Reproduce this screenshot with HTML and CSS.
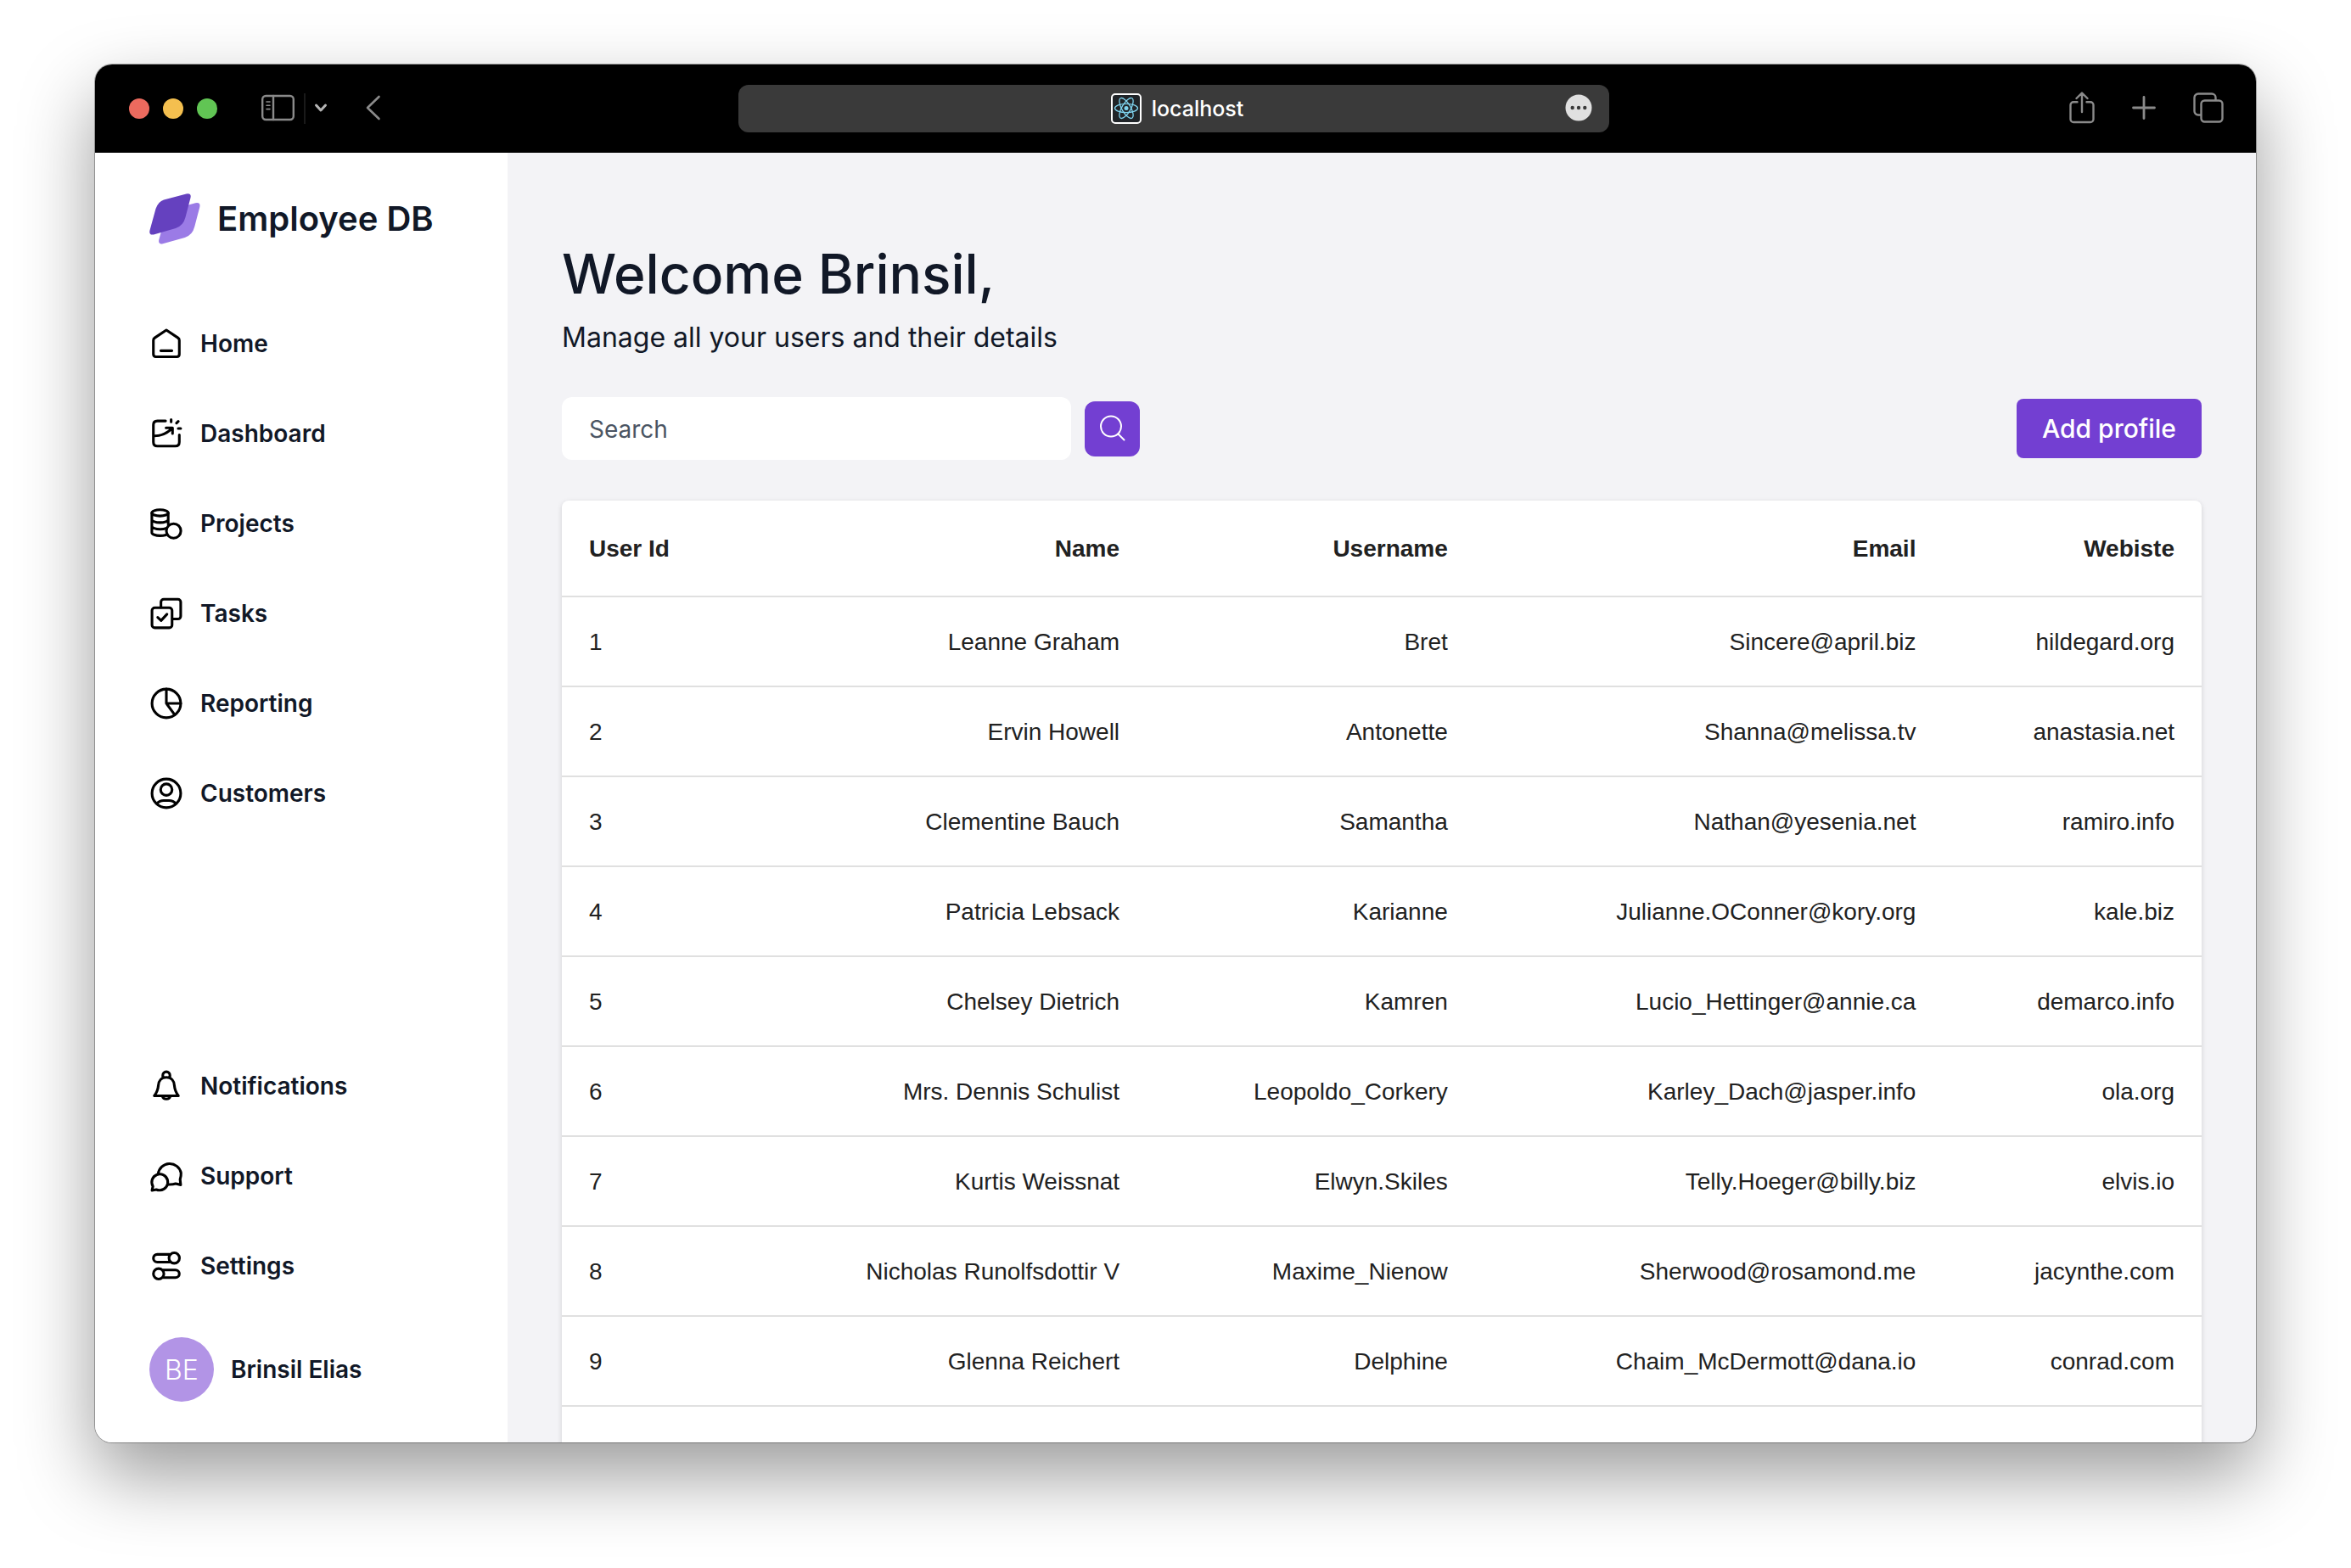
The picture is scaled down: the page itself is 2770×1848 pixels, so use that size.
FILE: index.html
```html
<!DOCTYPE html>
<html lang="en">
<head>
<meta charset="utf-8">
<meta name="viewport" content="width=device-width, initial-scale=1">
<title>Employee DB</title>
<link rel="stylesheet" href="styles.css">
</head>
<body>
<div class="window">
  <header class="titlebar">
    <div class="titlebar-left">
      <div class="lights">
        <button class="light light-close" aria-label="Close"></button>
        <button class="light light-minimise" aria-label="Minimise"></button>
        <button class="light light-zoom" aria-label="Zoom"></button>
      </div>
      <div class="side-controls">
        <button class="bar-button" aria-label="Toggle sidebar">
          <svg width="40" height="32" viewBox="0 0 40 32" fill="none" stroke="#8a8a8a" stroke-width="2.4" stroke-linecap="round"><rect x="1.2" y="2" width="36.6" height="28" rx="4"/><path d="M14 2v28"/><path d="M6 9h4M6 13.300h4M6 17.600h4" stroke-width="1.600"/></svg>
        </button>
        <span class="bar-divider"></span>
        <button class="bar-button" aria-label="Tab groups">
          <svg width="16" height="12" viewBox="0 0 16 12" fill="none" stroke="#b4b4b4" stroke-width="3" stroke-linecap="round" stroke-linejoin="round"><path d="M2.500 3l5.500 6 5.500-6"/></svg>
        </button>
      </div>
      <button class="bar-button" aria-label="Back">
        <svg width="20" height="30" viewBox="0 0 20 30" fill="none" stroke="#8a8a8a" stroke-width="2.600" stroke-linecap="round" stroke-linejoin="round"><path d="M16.500 2L3 15l13.500 13"/></svg>
      </button>
    </div>
    <div class="address">
      <span class="address-site">
        <svg width="36" height="36" viewBox="0 0 36 36"><rect x="1" y="1" width="34" height="34" rx="4" fill="#202428" stroke="#fff" stroke-width="2"/><g fill="none" stroke="#7fd3ee" stroke-width="1.300"><ellipse cx="18" cy="17.500" rx="13.500" ry="5.200"/><ellipse cx="18" cy="17.500" rx="13.500" ry="5.200" transform="rotate(60 18 17.500)"/><ellipse cx="18" cy="17.500" rx="13.500" ry="5.200" transform="rotate(120 18 17.500)"/></g><circle cx="18" cy="17.500" r="2.500" fill="#7fd3ee"/></svg>
        <span>localhost</span>
      </span>
      <button class="bar-button" aria-label="Page settings">
        <svg width="32" height="32" viewBox="0 0 32 32"><circle cx="16" cy="16" r="15.500" fill="#e0e0e0"/><g fill="#3a3a3a"><circle cx="8.700" cy="16" r="2.200"/><circle cx="16" cy="16" r="2.200"/><circle cx="23.300" cy="16" r="2.200"/></g></svg>
      </button>
    </div>
    <div class="titlebar-right">
      <button class="bar-button" aria-label="Share">
        <svg width="30" height="38" viewBox="0 0 30 38" fill="none" stroke="#8a8a8a" stroke-width="2.400" stroke-linecap="round" stroke-linejoin="round"><path d="M9.500 12.200H5a3.500 3.500 0 0 0-3.500 3.500V32.500A3.500 3.500 0 0 0 5 36h20a3.500 3.500 0 0 0 3.500-3.500V15.700A3.500 3.500 0 0 0 25 12.200h-4.500M15 24V2M8.500 8L15 1.500 21.500 8"/></svg>
      </button>
      <button class="bar-button" aria-label="New tab">
        <svg width="28" height="28" viewBox="0 0 28 28" fill="none" stroke="#8a8a8a" stroke-width="2.800" stroke-linecap="round"><path d="M14 1.500v25M1.500 14h25"/></svg>
      </button>
      <button class="bar-button" aria-label="Tab overview">
        <svg width="36" height="36" viewBox="0 0 36 36" fill="none" stroke="#8a8a8a" stroke-width="2.400" stroke-linejoin="round"><rect x="9.500" y="9.500" width="25" height="25" rx="4"/><path d="M9.500 26.500H6A4.500 4.500 0 0 1 1.500 22V6A4.500 4.500 0 0 1 6 1.500H22A4.500 4.500 0 0 1 26.500 6v3.500"/></svg>
      </button>
    </div>
  </header>

  <div class="app">
    <aside class="sidebar">
      <div class="brand">
        <svg width="60" height="60" viewBox="0 0 60 60"><path transform="translate(10.800 10.900)" fill="#9b7be6" d="M17 7.500L43.500.4Q50 -.8 48.400 5.500L42.500 28Q40 38 31 41L5 48.400Q-.8 49.500.5 43.500L7.500 18Q10.500 9.500 17 7.500Z"/><path fill="#6541bf" d="M17 7.500L43.500.4Q50 -.8 48.400 5.500L42.500 28Q40 38 31 41L5 48.400Q-.8 49.500.5 43.500L7.500 18Q10.500 9.500 17 7.500Z"/></svg>
        <span class="brand-name">Employee DB</span>
      </div>
      <nav class="nav" aria-label="Main">
        <a class="nav-link" href="#home"><svg class="icon" viewBox="1 1 22 22"><path d="M12 3.200L19.500 8.200Q20.400 8.800 20.400 9.800V18.900Q20.400 20.500 18.800 20.500H5.200Q3.600 20.500 3.600 18.900V9.800Q3.600 8.800 4.500 8.200ZM8.400 16.600h7.200"/></svg>Home</a>
        <a class="nav-link" href="#dashboard"><svg class="icon" viewBox="1 1 22 22"><path d="M11.500 3.800H6.200Q3.600 3.800 3.600 6.400V17.500Q3.600 20.100 6.200 20.100H17.800Q20.400 20.100 20.400 17.500V12.800M3.700 13.500C9 13.700 12.500 12 15.800 8.400M11.800 8.300H16V12M15.100 2.900v1.500M18.600 5.200l1.100-1.100M19.700 8.700h1.600"/></svg>Dashboard</a>
        <a class="nav-link" href="#projects"><svg class="icon" viewBox="1 1 22 22"><ellipse cx="7.900" cy="5.100" rx="5.300" ry="2"/><path d="M2.600 5.100V17.900c0 1.100 2.400 2 5.300 2 1.500 0 2.800-.2 3.800-.5M13.200 5.100v7.300M2.600 9.400c0 1.100 2.400 2 5.300 2s5.300-.9 5.300-2M2.600 13.700c0 1.100 2.400 2 5.300 2 1.600 0 3-.2 4-.6"/><circle cx="16.700" cy="16.800" r="4.700"/></svg>Projects</a>
        <a class="nav-link" href="#tasks"><svg class="icon" viewBox="1 1 22 22"><rect x="2.700" y="8.300" width="13" height="13" rx="1.800"/><path d="M8.500 8V4.600A1.800 1.800 0 0 1 10.300 2.800H19.500A1.800 1.800 0 0 1 21.300 4.600V13.800A1.800 1.800 0 0 1 19.500 15.600H16M6.400 14.500l2.200 2.100 3.800-4.100"/></svg>Tasks</a>
        <a class="nav-link" href="#reporting"><svg class="icon" viewBox="1 1 22 22"><circle cx="12" cy="12" r="9.300"/><path d="M12 2.700V12H21.300M12 12l5.400 7.400"/></svg>Reporting</a>
        <a class="nav-link" href="#customers"><svg class="icon" viewBox="1 1 22 22"><circle cx="12" cy="12" r="9.300"/><circle cx="12" cy="9.600" r="3.700"/><path d="M5.900 18.700C7 17.400 8.500 16.700 10.200 16.700H13.800C15.500 16.700 17 17.400 18.100 18.700"/></svg>Customers</a>
      </nav>
      <nav class="nav nav-bottom" aria-label="Account">
        <a class="nav-link" href="#notifications"><svg class="icon" viewBox="1 1 22 22"><path d="M12 6.400C8.700 6.400 7 8.800 6.800 11.600 6.600 14.200 6 15.900 4.200 18.300H19.800C18 15.900 17.400 14.200 17.200 11.600 17 8.800 15.300 6.400 12 6.400ZM9.700 6.600V5a2.300 2.300 0 0 1 4.600 0v1.600M9.400 18.500a2.700 2.600 0 0 0 5.200 0"/></svg>Notifications</a>
        <a class="nav-link" href="#support"><svg class="icon" viewBox="1 1 22 22"><path d="M6.700 10.700A7.500 7.500 0 0 1 21.500 10C21.600 11.800 21.300 13 20.900 14.200L21.300 17.700 18 17C16.500 17.500 15.200 17.600 13.300 17.500"/><path d="M3.300 18.700A5.200 5.200 0 1 1 8 21.200C7 21.300 6.200 21.100 5.500 20.800L2.700 21.300Z"/></svg>Support</a>
        <a class="nav-link" href="#settings"><svg class="icon" viewBox="1 1 22 22"><path d="M14 4.500H6.100a2.500 2.500 0 0 0 0 5H14M10 14.600h7.900a2.500 2.500 0 0 1 0 5H10"/><circle cx="17.100" cy="6.900" r="3.400"/><circle cx="7" cy="17.100" r="3.400"/></svg>Settings</a>
      </nav>
      <div class="profile">
        <span class="avatar">BE</span>
        <span>Brinsil Elias</span>
      </div>
    </aside>

    <main class="main">
      <h1 class="title">Welcome Brinsil,</h1>
      <p class="subtitle">Manage all your users and their details</p>
      <div class="toolbar">
        <form class="search" role="search">
          <input class="search-input" type="search" placeholder="Search" aria-label="Search">
          <button class="search-button" type="button" aria-label="Search">
            <svg width="32" height="32" viewBox="0 0 32 32" fill="none" stroke="#fff" stroke-width="2" stroke-linecap="round"><circle cx="14" cy="13.500" r="12"/><path d="M22.500 22.500l7 7"/></svg>
          </button>
        </form>
        <button class="add-button" type="button">Add profile</button>
      </div>
      <div class="card">
        <table class="users">
          <thead>
            <tr><th scope="col">User Id</th><th scope="col">Name</th><th scope="col">Username</th><th scope="col">Email</th><th scope="col">Webiste</th></tr>
          </thead>
          <tbody>
            <tr><td>1</td><td>Leanne Graham</td><td>Bret</td><td>Sincere@april.biz</td><td>hildegard.org</td></tr>
            <tr><td>2</td><td>Ervin Howell</td><td>Antonette</td><td>Shanna@melissa.tv</td><td>anastasia.net</td></tr>
            <tr><td>3</td><td>Clementine Bauch</td><td>Samantha</td><td>Nathan@yesenia.net</td><td>ramiro.info</td></tr>
            <tr><td>4</td><td>Patricia Lebsack</td><td>Karianne</td><td>Julianne.OConner@kory.org</td><td>kale.biz</td></tr>
            <tr><td>5</td><td>Chelsey Dietrich</td><td>Kamren</td><td>Lucio_Hettinger@annie.ca</td><td>demarco.info</td></tr>
            <tr><td>6</td><td>Mrs. Dennis Schulist</td><td>Leopoldo_Corkery</td><td>Karley_Dach@jasper.info</td><td>ola.org</td></tr>
            <tr><td>7</td><td>Kurtis Weissnat</td><td>Elwyn.Skiles</td><td>Telly.Hoeger@billy.biz</td><td>elvis.io</td></tr>
            <tr><td>8</td><td>Nicholas Runolfsdottir V</td><td>Maxime_Nienow</td><td>Sherwood@rosamond.me</td><td>jacynthe.com</td></tr>
            <tr><td>9</td><td>Glenna Reichert</td><td>Delphine</td><td>Chaim_McDermott@dana.io</td><td>conrad.com</td></tr>
            <tr><td>10</td><td>Clementina DuBuque</td><td>Moriah.Stanton</td><td>Rey.Padberg@karina.biz</td><td>ambrose.net</td></tr>
          </tbody>
        </table>
      </div>
    </main>
  </div>
</div>
</body>
</html>
```
FILE: styles.css
```css
*, *::before, *::after { box-sizing: border-box; }

body {
  margin: 0;
  height: 100vh;
  padding: 76px 112px 148px;
  display: flex;
  background: #fff;
  color: #111827;
  font-family: Inter, "Liberation Sans", sans-serif;
  font-size: 28px;
}

button, input { font: inherit; border: 0; margin: 0; }
button { cursor: pointer; }
svg { display: block; flex: none; }

.window {
  flex: 1;
  min-width: 0;
  display: flex;
  flex-direction: column;
  overflow: hidden;
  border-radius: 20px;
  background: #f3f3f6;
  box-shadow: 0 0 0 1px rgba(0, 0, 0, .3), 0 38px 88px rgba(0, 0, 0, .4);
}

/* Browser bar */
.titlebar {
  flex: none;
  height: 104px;
  padding: 0 38px 0 40px;
  display: grid;
  grid-template-columns: 718fr 1026fr 724fr;
  align-items: center;
  background: #000;
}

.titlebar-left, .titlebar-right, .side-controls, .lights, .address-site {
  display: flex;
  align-items: center;
}

.titlebar-left { gap: 52px; }
.titlebar-right { justify-content: flex-end; gap: 44px; }
.lights { gap: 16px; }
.side-controls { gap: 10px; margin-right: -8px; }

.light { width: 24px; height: 24px; padding: 0; border-radius: 50%; }
.light-close { background: #ec6a5e; }
.light-minimise { background: #f4bf4f; }
.light-zoom { background: #61c554; }

.bar-button { padding: 0 0 2px; background: none; }
.bar-divider { width: 2px; height: 36px; background: #1a1a1a; }

.address {
  height: 56px;
  padding: 0 20px 0 28px;
  display: grid;
  grid-template-columns: 32px 1fr 32px;
  align-items: center;
  border-radius: 12px;
  background: #3a3a3a;
  color: #fff;
  font-size: 25px;
  font-weight: 500;
}

.address-site { grid-column: 2; justify-content: center; gap: 12px; }

/* Page */
.app { flex: 1; min-height: 0; display: flex; }

.sidebar {
  flex: none;
  width: 486px;
  padding: 48px 64px;
  display: flex;
  flex-direction: column;
  background: #fff;
  font-weight: 600;
}

.brand { display: flex; align-items: center; gap: 20px; margin-bottom: 96px; }
.brand-name { font-size: 40px; line-height: 60px; }

.nav { display: flex; flex-direction: column; gap: 64px; }
.nav-bottom { margin-top: auto; margin-bottom: 63px; }

.nav-link {
  display: flex;
  align-items: center;
  gap: 20px;
  line-height: 42px;
  color: inherit;
  text-decoration: none;
}

.icon {
  width: 40px;
  height: 40px;
  fill: none;
  stroke: #000;
  stroke-width: 1.7;
  stroke-linecap: round;
  stroke-linejoin: round;
}

.profile { display: flex; align-items: center; gap: 20px; }

.avatar {
  width: 76px;
  height: 76px;
  display: grid;
  place-items: center;
  border-radius: 50%;
  background: #b294e6;
  color: #fff;
  font-size: 32px;
  font-weight: 300;
}

.main { flex: 1; min-width: 0; padding: 104px 64px 0; overflow: hidden; }
.title { margin: 0 0 12px; font-size: 64px; line-height: 78px; font-weight: 500; }
.subtitle { margin: 0 0 46px; font-size: 32px; line-height: 48px; }

.toolbar {
  display: flex;
  align-items: center;
  justify-content: space-between;
  gap: 32px;
  margin-bottom: 48px;
}

.search { display: flex; align-items: center; gap: 16px; }

.search-input {
  width: 600px;
  height: 74px;
  padding: 2px 32px 0;
  border-radius: 12px;
  background: #fff;
  color: inherit;
}

.search-input::placeholder { color: #4b5563; opacity: 1; }

.search-button {
  width: 65px;
  height: 65px;
  padding: 0;
  display: grid;
  place-items: center;
  border-radius: 12px;
  background: #733fd2;
}

.add-button {
  height: 70px;
  padding: 0 30px;
  border-radius: 8px;
  background: #733fd2;
  color: #fff;
  font-size: 30px;
  font-weight: 500;
}

.card {
  border-radius: 8px;
  background: #fff;
  box-shadow: 0 2px 6px rgba(0, 0, 0, .14);
}

.users {
  width: 100%;
  border-spacing: 0;
  color: #212121;
  font-family: "Liberation Sans", Arial, sans-serif;
  line-height: 40px;
}

.users th, .users td {
  padding: 33px 32px 31px;
  border-bottom: 2px solid #e0e0e0;
  text-align: right;
  white-space: nowrap;
}

.users th { line-height: 48px; }
.users th:first-child, .users td:first-child { text-align: left; }
```
